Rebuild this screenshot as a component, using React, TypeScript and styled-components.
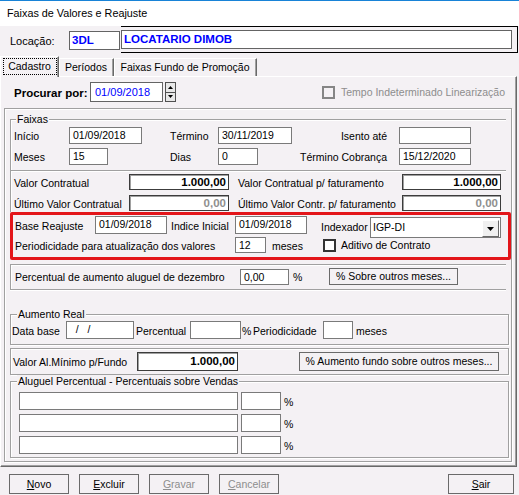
import React from 'react';
import styled, { createGlobalStyle, css } from 'styled-components';

const BG = '#f4f1f4';
const FONT = `"Liberation Sans", Arial, sans-serif`;
const LINE = '#a0a0a0';

const Global = createGlobalStyle`
  html, body { margin: 0; padding: 0; background: ${BG}; }
  body { font-family: ${FONT}; font-size: 10.5px; color: #000; width: 519px; height: 495px; overflow: hidden; }
  * { box-sizing: border-box; }
`;

const Window = styled.div`
  width: 519px;
  height: 495px;
  display: flex;
  flex-direction: column;
  background: ${BG};
`;

const TitleBar = styled.div`
  flex: none;
  height: 26px;
  background: #fff;
  border-top: 1px solid #1883d7;
  display: flex;
  align-items: center;
  padding: 0 0 2px 7px;
  font-size: 10.8px;
`;

const LocationRow = styled.div`
  flex: none;
  height: 28px;
  display: flex;
  align-items: flex-start;
`;

const LocLabel = styled.span`
  margin: 9px 0 0 10px;
  width: 59px;
  line-height: 13px;
  font-size: 11px;
`;

const CodeField = styled.div<{ $w?: number }>`
  flex: ${p => (p.$w ? 'none' : '1')};
  ${p => p.$w && css`width: ${p.$w}px;`}
  height: 19px;
  background: #fff;
  border: 1px solid #646464;
  color: #0000ff;
  font-weight: bold;
  font-size: 11.5px;
  line-height: 16px;
  padding-left: 2px;
`;

const CodeSlot = styled.div`
  margin-top: 5px;
  display: flex;
`;

const NameFrame = styled.div`
  margin-left: 1px;
  width: 397px;
  height: 27px;
  border: 1px solid #000;
  border-left: none;
  padding: 3px 5px 3px 0;
  display: flex;
`;

const TabStrip = styled.div`
  flex: none;
  height: 22px;
  display: flex;
  align-items: flex-end;
  position: relative;
  z-index: 1;
`;

const Tab = styled.div<{ $w: number; $active?: boolean }>`
  flex: none;
  width: ${p => p.$w}px;
  height: ${p => (p.$active ? 21 : 18)}px;
  margin-bottom: ${p => (p.$active ? -1 : 0)}px;
  background: ${BG};
  border-top: 1px solid #fff;
  border-left: 1px solid #fff;
  border-right: 1px solid #696969;
  box-shadow: inset -1px 0 0 ${LINE};
  display: flex;
  align-items: ${p => (p.$active ? 'flex-start' : 'center')};
  justify-content: center;
  padding-top: ${p => (p.$active ? 1 : 0)}px;
  padding-right: 1px;
  white-space: nowrap;
  line-height: 13px;
`;

const FocusRing = styled.span`
  margin-left: 1px;
  width: 54px;
  height: 17px;
  border: 1px dotted #000;
  display: flex;
  align-items: center;
  justify-content: center;
`;

const TabPanel = styled.div`
  flex: none;
  width: 517px;
  height: 391px;
  border-top: 1px solid #fff;
  border-left: 1px solid #fff;
  border-right: 1px solid #696969;
  border-bottom: 1px solid #696969;
  box-shadow: inset -1px -1px 0 ${LINE};
  display: flex;
  flex-direction: column;
`;

const SearchRow = styled.div`
  flex: none;
  height: 20px;
  margin-top: 5px;
  padding-left: 13px;
  display: flex;
  align-items: center;
`;

const SearchLabel = styled.span`
  width: 76px;
  font-weight: bold;
  font-size: 11.5px;
  line-height: 14px;
  padding-top: 1px;
`;

const DateField = styled.div`
  width: 73px;
  height: 20px;
  background: #fff;
  border: 1px solid #646464;
  color: #0000ff;
  font-size: 11px;
  line-height: 16px;
  padding: 1px 0 0 4px;
`;

const Spin = styled.div`
  margin-left: 2px;
  width: 11px;
  height: 20px;
  display: flex;
  flex-direction: column;
  border: 1px solid #505050;
`;

const SpinHalf = styled.div<{ $bottom?: boolean }>`
  flex: 1;
  display: flex;
  align-items: center;
  justify-content: center;
  background: #e8e8e8;
  ${p => p.$bottom && css`border-top: 1px solid #505050;`}
`;

const Check = styled.span<{ $disabled?: boolean; $ml?: number }>`
  flex: none;
  width: 13px;
  height: 13px;
  margin-left: ${p => p.$ml ?? 0}px;
  border: 2px solid ${p => (p.$disabled ? '#858585' : '#333')};
  background: ${p => (p.$disabled ? BG : '#fff')};
`;

const Frame = styled.div`
  flex: none;
  margin: 6px 0 0 3px;
  width: 508px;
  border: 1px solid ${LINE};
  box-shadow: 1px 1px 0 #fff, inset 1px 1px 0 #fff;
  padding: 10px 0 3px 5px;
  display: flex;
  flex-direction: column;
  align-items: flex-start;
`;

const FaixasGroup = styled.div`
  width: 496px;
  border-top: 1px solid ${LINE};
  border-left: 1px solid ${LINE};
  border-bottom: 1px solid ${LINE};
  box-shadow: inset 1px 1px 0 #fff, 0 1px 0 #fff;
  padding: 0 0 5px 3px;
  display: flex;
  flex-direction: column;
`;

const Caption = styled.div<{ $ml: number }>`
  align-self: flex-start;
  margin: -7px 0 0 ${p => p.$ml}px;
  padding: 0 1px;
  height: 13px;
  line-height: 13px;
  background: ${BG};
  white-space: nowrap;
`;

const ValoresBox = styled.div`
  width: 496px;
  border-left: 1px solid ${LINE};
  box-shadow: inset 1px 0 0 #fff;
  padding: 3px 0 1px 3px;
  display: flex;
  flex-direction: column;
`;

const ReajusteBox = styled.div`
  width: 501px;
  border: 3px solid #e3151a;
  border-radius: 2px;
  padding: 1px 0 4px 2px;
  display: flex;
  flex-direction: column;
`;

const PercentBox = styled.div`
  margin-top: 4px;
  width: 496px;
  border-top: 1px solid ${LINE};
  border-left: 1px solid ${LINE};
  border-bottom: 1px solid ${LINE};
  box-shadow: inset 1px 1px 0 #fff, 0 1px 0 #fff;
  padding: 3px 0 4px 4px;
  display: flex;
  flex-direction: column;
`;

const GroupBox = styled.div<{ $mt: number; $pl: number; $pb: number }>`
  margin-top: ${p => p.$mt}px;
  width: 499px;
  border: 1px solid ${LINE};
  box-shadow: inset 1px 1px 0 #fff, 1px 1px 0 #fff;
  padding: 0 0 ${p => p.$pb}px ${p => p.$pl}px;
  display: flex;
  flex-direction: column;
`;

const Row = styled.div<{ $h: number; $mt?: number; $top?: boolean }>`
  flex: none;
  display: flex;
  align-items: ${p => (p.$top ? 'flex-start' : 'center')};
  height: ${p => p.$h}px;
  margin-top: ${p => p.$mt ?? 0}px;
`;

const Label = styled.span<{ $w?: number; $ml?: number; $right?: boolean; $gray?: boolean; $dy?: number }>`
  flex: none;
  display: block;
  white-space: pre;
  ${p => p.$w !== undefined && css`width: ${p.$w}px;`}
  margin-left: ${p => p.$ml ?? 0}px;
  text-align: ${p => (p.$right ? 'right' : 'left')};
  color: ${p => (p.$gray ? '#8d8d8d' : '#000')};
  line-height: 13px;
  padding-top: ${p => p.$dy ?? 2}px;
`;

const Field = styled.div<{ $w: number; $h: number; $ml?: number; $mt?: number }>`
  flex: none;
  width: ${p => p.$w}px;
  height: ${p => p.$h}px;
  margin-left: ${p => p.$ml ?? 0}px;
  margin-top: ${p => p.$mt ?? 0}px;
  background: #fff;
  border: 1px solid #7a7a7a;
  padding: 1px 0 0 3px;
  line-height: 13px;
  white-space: pre;
  overflow: hidden;
`;

const ValueField = styled.div<{ $w: number; $h: number; $ml?: number; $disabled?: boolean }>`
  flex: none;
  width: ${p => p.$w}px;
  height: ${p => p.$h}px;
  margin-left: ${p => p.$ml ?? 0}px;
  background: #fff;
  border: 1px solid #3c3c3c;
  box-shadow: inset 1px 1px 0 #a0a0a0;
  text-align: right;
  padding-right: 2px;
  font-weight: bold;
  font-size: 11.5px;
  line-height: ${p => p.$h - 2}px;
  color: ${p => (p.$disabled ? '#8f8f8f' : '#000')};
`;

const Combo = styled.div`
  flex: none;
  margin: 1px 0 0 0;
  width: 131px;
  height: 21px;
  background: #fff;
  border: 1px solid #7a7a7a;
  display: flex;
  align-items: flex-start;
  padding: 2px 1px 0 2px;
`;

const ComboText = styled.span`
  flex: 1;
  line-height: 15px;
`;

const ComboButton = styled.span`
  width: 17px;
  height: 17px;
  background: #f0f0f0;
  border-top: 1px solid #fff;
  border-left: 1px solid #fff;
  border-right: 1px solid #696969;
  border-bottom: 1px solid #696969;
  display: flex;
  align-items: center;
  justify-content: center;
`;

const Button = styled.button<{ $w: number; $h: number; $ml?: number; $disabled?: boolean }>`
  flex: none;
  width: ${p => p.$w}px;
  height: ${p => p.$h}px;
  margin-left: ${p => p.$ml ?? 0}px;
  padding: 0;
  font-family: ${FONT};
  font-size: 10.5px;
  color: ${p => (p.$disabled ? '#8d8d8d' : '#000')};
  background: ${BG};
  border: 1px solid #6a6a6a;
  line-height: 13px;
  white-space: nowrap;
`;

const ButtonBar = styled.div`
  flex: none;
  height: 28px;
  display: flex;
  align-items: flex-start;
  padding: 7px 5px 0 9px;
  gap: 10px;
`;

const Right = styled.span`
  margin-left: auto;
  display: flex;
`;

const Tri = ({ down }: { down?: boolean }) => (
  <svg width="5" height="3" viewBox="0 0 5 3">
    <polygon points={down ? '0,0 5,0 2.5,3' : '0,3 5,3 2.5,0'} fill="#000" />
  </svg>
);

const ComboArrow = () => (
  <svg width="7" height="4" viewBox="0 0 7 4">
    <polygon points="0,0 7,0 3.5,4" fill="#000" />
  </svg>
);

export default function App() {
  return (
    <Window>
      <Global />
      <TitleBar>Faixas de Valores e Reajuste</TitleBar>

      <LocationRow>
        <LocLabel>Locação:</LocLabel>
        <CodeSlot>
          <CodeField $w={51}>3DL</CodeField>
        </CodeSlot>
        <NameFrame>
          <CodeField>LOCATARIO DIMOB</CodeField>
        </NameFrame>
      </LocationRow>

      <TabStrip>
        <Tab $w={59} $active>
          <FocusRing>Cadastro</FocusRing>
        </Tab>
        <Tab $w={55}>Períodos</Tab>
        <Tab $w={143}>Faixas Fundo de Promoção</Tab>
      </TabStrip>

      <TabPanel>
        <SearchRow>
          <SearchLabel>Procurar por:</SearchLabel>
          <DateField>01/09/2018</DateField>
          <Spin>
            <SpinHalf><Tri /></SpinHalf>
            <SpinHalf $bottom><Tri down /></SpinHalf>
          </Spin>
          <Check $disabled $ml={146} />
          <Label $ml={6} $gray $dy={0}>Tempo Indeterminado Linearização</Label>
        </SearchRow>

        <Frame>
          <FaixasGroup>
            <Caption $ml={2}>Faixas</Caption>
            <Row $h={17} $mt={1}>
              <Label $w={55}>Início</Label>
              <Field $w={73} $h={17}>01/09/2018</Field>
              <Label $w={48} $ml={28}>Término</Label>
              <Field $w={74} $h={17}>30/11/2019</Field>
              <Label $w={95} $right>Isento até</Label>
              <Field $w={72} $h={17} $ml={12} />
            </Row>
            <Row $h={17} $mt={4}>
              <Label $w={55}>Meses</Label>
              <Field $w={39} $h={17}>15</Field>
              <Label $w={48} $ml={62}>Dias</Label>
              <Field $w={40} $h={17}>0</Field>
              <Label $w={129} $right>Término Cobrança</Label>
              <Field $w={72} $h={17} $ml={12}>15/12/2020</Field>
            </Row>
          </FaixasGroup>

          <ValoresBox>
            <Row $h={16}>
              <Label $w={115}>Valor Contratual</Label>
              <ValueField $w={100} $h={16}>1.000,00</ValueField>
              <Label $w={164} $ml={9}>Valor Contratual p/ faturamento</Label>
              <ValueField $w={99} $h={16}>1.000,00</ValueField>
            </Row>
            <Row $h={16} $mt={5}>
              <Label $w={115}>Último Valor Contratual</Label>
              <ValueField $w={100} $h={16} $disabled>0,00</ValueField>
              <Label $w={164} $ml={9}>Último Valor Contr. p/ faturamento</Label>
              <ValueField $w={99} $h={16} $disabled>0,00</ValueField>
            </Row>
          </ValoresBox>

          <ReajusteBox>
            <Row $h={21} $top>
              <Label $w={80} $dy={4}>Base Reajuste</Label>
              <Field $w={72} $h={18}>01/09/2018</Field>
              <Label $w={64} $ml={4} $dy={4}>Indice Inicial</Label>
              <Field $w={72} $h={18}>01/09/2018</Field>
              <Label $w={49} $ml={14} $dy={5}>Indexador</Label>
              <Combo>
                <ComboText>IGP-DI</ComboText>
                <ComboButton><ComboArrow /></ComboButton>
              </Combo>
            </Row>
            <Row $h={16}>
              <Label $w={220}>Periodicidade para atualização dos valores</Label>
              <Field $w={31} $h={16}>12</Field>
              <Label $w={51} $ml={6}>meses</Label>
              <Check />
              <Label $ml={5} $dy={0}>Aditivo de Contrato</Label>
            </Row>
          </ReajusteBox>

          <PercentBox>
            <Row $h={17}>
              <Label $w={225}>Percentual de aumento aluguel de dezembro</Label>
              <Field $w={49} $h={16}>0,00</Field>
              <Label $w={36} $ml={4}>%</Label>
              <Button $w={129} $h={17}>% Sobre outros meses...</Button>
            </Row>
          </PercentBox>

          <GroupBox $mt={24} $pl={1} $pb={5}>
            <Caption $ml={5}>Aumento Real</Caption>
            <Row $h={18}>
              <Label $w={54}>Data base</Label>
              <Field $w={68} $h={18}>{'  /   /'}</Field>
              <Label $w={54} $ml={2}>Percentual</Label>
              <Field $w={51} $h={18} />
              <Label $w={11} $ml={1}>%</Label>
              <Label $w={70}>Periodicidade</Label>
              <Field $w={30} $h={18} />
              <Label $ml={3}>meses</Label>
            </Row>
          </GroupBox>

          <GroupBox $mt={3} $pl={2} $pb={3}>
            <Row $h={19} $mt={3}>
              <Label $w={124}>Valor Al.Mínimo p/Fundo</Label>
              <ValueField $w={101} $h={19}>1.000,00</ValueField>
              <Button $w={200} $h={19} $ml={61}>% Aumento fundo sobre outros meses...</Button>
            </Row>
          </GroupBox>

          <GroupBox $mt={6} $pl={8} $pb={3}>
            <Caption $ml={-2}>Aluguel Percentual - Percentuais sobre Vendas</Caption>
            {[0, 1, 2].map(i => (
              <Row key={i} $h={18} $mt={4}>
                <Field $w={219} $h={18} />
                <Field $w={40} $h={18} $ml={3} />
                <Label $ml={3}>%</Label>
              </Row>
            ))}
          </GroupBox>
        </Frame>
      </TabPanel>

      <ButtonBar>
        <Button $w={60} $h={20}><u>N</u>ovo</Button>
        <Button $w={60} $h={20}><u>E</u>xcluir</Button>
        <Button $w={60} $h={20} $disabled><u>G</u>ravar</Button>
        <Button $w={60} $h={20} $disabled><u>C</u>ancelar</Button>
        <Right>
          <Button $w={66} $h={20}><u>S</u>air</Button>
        </Right>
      </ButtonBar>
    </Window>
  );
}
